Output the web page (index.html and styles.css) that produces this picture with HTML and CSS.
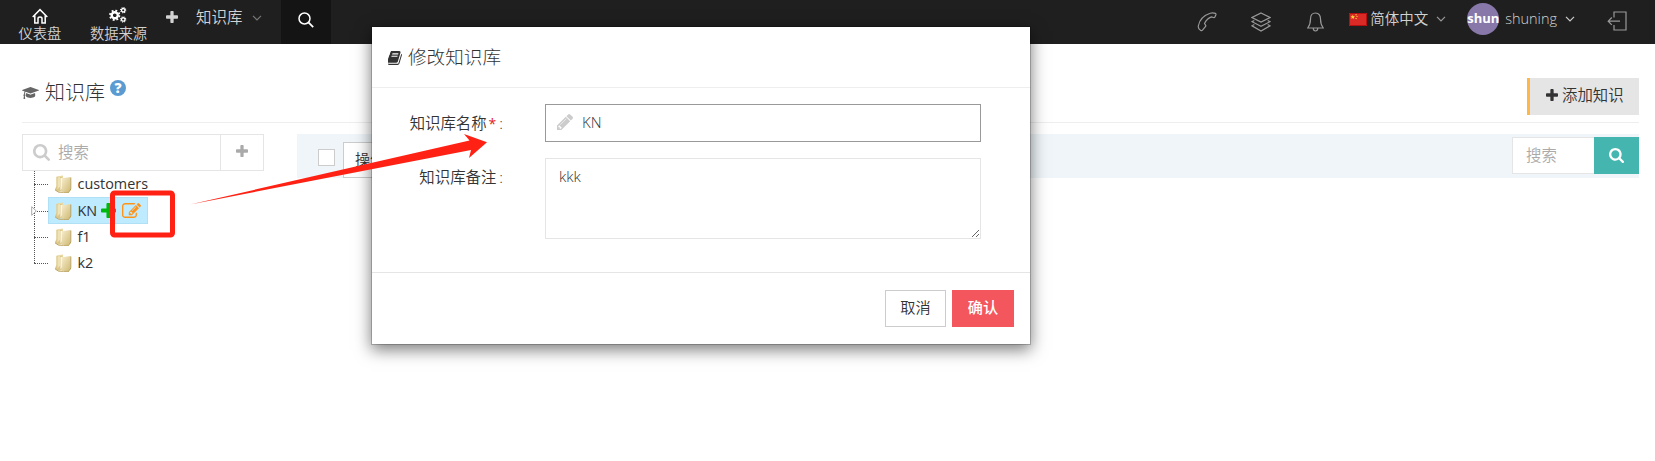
FILE: index.html
```html
<!DOCTYPE html>
<html lang="zh-CN">
<head>
<meta charset="utf-8">
<title>知识库</title>
<link rel="stylesheet" href="styles.css">
</head>
<body>
<svg class="defs" aria-hidden="true">
  <symbol id="plus" viewBox="192 128 1408 1408"><path d="M1600 736v192q0 40-28 68t-68 28h-416v416q0 40-28 68t-68 28h-192q-40 0-68-28t-28-68v-416h-416q-40 0-68-28t-28-68v-192q0-40 28-68t68-28h416v-416q0-40 28-68t68-28h192q40 0 68 28t28 68v416h416q40 0 68 28t28 68z"/></symbol>
  <symbol id="search" viewBox="64 128 1664 1664"><path d="M1216 832q0-185-131.500-316.500t-316.500-131.500-316.500 131.500-131.500 316.500 131.500 316.500 316.500 131.500 316.500-131.500 131.500-316.500zm512 832q0 52-38 90t-90 38q-54 0-90-38l-343-342q-179 124-399 124-143 0-273.500-55.500t-225-150-150-225-55.500-273.500 55.500-273.500 150-225 225-150 273.500-55.500 273.500 55.500 225 150 150 225 55.500 273.500q0 220-124 399l343 343q37 37 37 90z"/></symbol>
  <symbol id="chevron" viewBox="0 0 10 6"><path d="M1 .8 5 4.800 9 .8" fill="none" stroke="currentColor" stroke-width="1.200"/></symbol>
  <symbol id="gear" viewBox="-10 -10 20 20"><circle r="5.300" fill="none" stroke="currentColor" stroke-width="4.200"/><circle r="8.300" fill="none" stroke="currentColor" stroke-width="3.200" stroke-dasharray="3.260 3.260"/></symbol>
  <symbol id="folder" viewBox="0 0 18 18">
    <path d="M2.500 1.500 9 .5v14.500l-6.500 1z" fill="#e9d9a3"/>
    <path d="M2.500 2v9L.8 14.500l3 2.500 4-1V2z" fill="#dcc78a"/>
    <path d="M3.500 2.500 6 2v9.500l-2.500 3z" fill="#efe2b4"/>
    <path d="M6.500 3h1.700v10l-1.700 2.500z" fill="#fdf9ea"/>
    <path d="M8 3.300 16.500 2v13L15 17.200l-7.500-.4z" fill="url(#fold)"/>
    <path d="M15.300 16.600 16.800 14V2.500" fill="none" stroke="#b7a05e"/>
    <path d="M1 14.800 4.500 17.200l5 .2H15" fill="none" stroke="#bfa766"/>
  </symbol>
  <linearGradient id="fold" x2="1" y2="1"><stop offset="0" stop-color="#f8efcf"/><stop offset="1" stop-color="#d0b974"/></linearGradient>
</svg>

<header class="topbar">
  <nav class="nav">
    <a class="tile dashboard"><svg class="home" viewBox="0 0 16 16"><path d="M.7 9 8 1.600 15.300 9M2.800 7.500V15H6v-4.500q0-1.500 2-1.500t2 1.500V15h3.200V7.500" fill="none" stroke="currentColor" stroke-width="1.500"/></svg><span>仪表盘</span></a>
    <a class="tile sources"><svg class="gears" viewBox="0 0 18 16"><use href="#gear" x="0" y="2.500" width="11.500" height="11.500"/><use href="#gear" x="11" y="0" width="6.500" height="6.500"/><use href="#gear" x="11" y="9.200" width="6.500" height="6.500"/></svg><span>数据来源</span></a>
    <a class="quick"><svg class="plus12"><use href="#plus"/></svg><span>知识库</span><svg class="chev dim"><use href="#chevron"/></svg></a>
    <a class="find"><svg viewBox="0 0 16 16"><circle cx="6.500" cy="6.500" r="5.500" fill="none" stroke="currentColor" stroke-width="1.500"/><path d="m10.400 10.400 4.800 4.800" stroke="currentColor" stroke-width="1.800"/></svg></a>
  </nav>
  <div class="tools">
    <svg class="tool phone" viewBox="0 0 20 20"><path d="M13.200 1.200q2.500-.9 5.300.2.600.5.400 1.300l-1.100 2.400q-.5.700-1.300.4l-2-.6Q10 6.300 7.500 11.500l1.200 1.800q.3.600-.1 1.200l-3.100 3.700q-.8.900-1.700.3-2.900-1.700-2.500-4.500Q3 4.500 13.200 1.200z"/></svg>
    <svg class="tool layers" viewBox="0 0 20 20"><path d="m10 1 9 4.500-9 4.500-9-4.500zM3.300 8.400 1 9.700l9 4.600 9-4.600-2.300-1.300M3.300 12.500 1 13.800 10 19l9-5.200-2.300-1.300"/></svg>
    <svg class="tool bell" viewBox="0 0 17 20"><path d="M8.500 1C4.800 1 3.500 4 3.500 7c0 4-.8 6.500-2.800 9h15.600c-2-2.500-2.800-5-2.800-9 0-3-1.300-6-5-6zM6.200 16.300q.2 2.700 2.300 2.700t2.300-2.700"/></svg>
    <div class="lang"><svg class="flag" viewBox="0 0 18 13"><path fill="#d92a25" d="M0 0h18v13H0z"/><path d="M.5.5h17v12H.5z" fill="none" stroke="#b30f12"/><path d="m3.800 1.800.6 1.500H6L4.800 4.400l.4 1.600-1.400-.9-1.400.9.400-1.600-1.200-1.100h1.600zM6.500 1.300h1.200v1H6.500zM7.500 3h1v1h-1zM6.500 5h1.200v1H6.500z" fill="#ffd83b"/></svg><span>简体中文</span><svg class="chev"><use href="#chevron"/></svg></div>
    <div class="user"><span class="avatar">shun</span><span class="name">shuning</span><svg class="chev light"><use href="#chevron"/></svg></div>
    <svg class="tool logout" viewBox="0 0 20 20"><path d="M7 6.500V1h12v18H7v-5M13 10.200H1.200M4.800 6.500 1.200 10.200l3.600 3.700"/></svg>
  </div>
</header>

<main class="page">
  <div class="page-head">
    <h1><svg class="cap" viewBox="0 128 2304 1408" preserveAspectRatio="none"><path d="M1774 836l18 316q4 69-82 128t-235 93.500-323 34.500-323-34.500-235-93.500-82-128l18-316 574 181q22 7 48 7t48-7zm530-324q0 23-22 31l-1120 352q-4 1-10 1t-10-1l-652-206q-43 34-71 111.500t-34 178.500q63 36 63 109 0 69-58 107l58 433q2 14-8 25-9 11-24 11h-192q-15 0-24-11-10-11-8-25l58-433q-58-38-58-107 0-73 65-111 11-207 98-330l-333-104q-22-8-22-31t22-31l1120-352q4-1 10-1t10 1l1120 352q22 8 22 31z"/></svg><span>知识库</span><b class="help">?</b></h1>
    <button class="add"><svg class="plus12"><use href="#plus"/></svg>添加知识</button>
  </div>
  <div class="columns">
    <aside class="side">
      <div class="side-search"><div class="field"><svg><use href="#search"/></svg>搜索</div><div class="side-add"><svg class="plus12"><use href="#plus"/></svg></div></div>
      <ul class="tree">
        <li><i></i><div class="node"><svg><use href="#folder"/></svg>customers</div></li>
        <li class="current"><i></i><svg class="expander" viewBox="0 0 6 10"><path d="M.7.700 5.300 5 .7 9.300z" fill="#fff" stroke="#aaa"/></svg><div class="node"><svg><use href="#folder"/></svg>KN<svg class="node-add"><use href="#plus"/></svg><svg class="node-edit" viewBox="0 128 1792 1408"><path d="M888 1184l116-116-152-152-116 116v56h96v96h56zm440-720q-16-16-33 1l-350 350q-17 17-1 33t33-1l350-350q17-17 1-33zm80 594v190q0 119-84.500 203.500t-203.500 84.500h-832q-119 0-203.500-84.500t-84.500-203.500v-832q0-119 84.500-203.500t203.500-84.500h832q63 0 117 25 15 7 18 23 3 17-9 29l-49 49q-14 14-32 8-23-6-45-6h-832q-66 0-113 47t-47 113v832q0 66 47 113t113 47h832q66 0 113-47t47-113v-126q0-13 9-22l64-64q15-15 35-7t20 29zm-96-738l288 288-672 672h-288v-288zm444 132l-92 92-288-288 92-92q28-28 68-28t68 28l152 152q28 28 28 68t-28 68z"/></svg></div></li>
        <li><i></i><div class="node"><svg><use href="#folder"/></svg>f1</div></li>
        <li class="last"><i></i><div class="node"><svg><use href="#folder"/></svg>k2</div></li>
      </ul>
    </aside>
    <section class="bar">
      <span class="check"></span><button class="action">操作</button>
      <div class="bar-search"><div class="bar-field">搜索</div><button class="go"><svg><use href="#search"/></svg></button></div>
    </section>
  </div>
</main>

<div class="modal">
  <div class="modal-head"><svg class="book" viewBox="118 128 1550 1536" preserveAspectRatio="none"><path d="M1639 478q40 57 18 129l-275 906q-19 64-76.500 107.500t-122.500 43.500h-923q-77 0-148.500-53.500t-99.500-131.500q-24-67-2-127 0-4 3-27t4-37q1-8-3-21.500t-3-19.500q2-11 8-21t16.500-23.500 16.500-23.500q23-38 45-91.500t30-91.500q3-10 .5-30t-.5-28q3-11 17-28t17-23q21-36 42-92t25-90q1-9-2.500-32t.5-28q4-13 22-30.500t22-22.500q19-26 42.500-84.500t27.500-96.500q1-8-3-25.500t-2-26.500q2-8 9-18t18-23 17-21q8-12 16.500-30.500t15-35 16-36 19.500-32 26.500-23.500 36-11.500 47.500 5.500l-1 3q38-9 51-9h761q74 0 114 56t18 130l-274 906q-36 119-71.500 153.500t-128.500 34.500h-869q-27 0-38 15-11 16-1 43 24 70 144 70h923q29 0 56-15.500t35-41.500l300-987q7-22 5-57 38 15 59 43zm-1064 2q-4 13 2 22.500t20 9.500h608q13 0 25.500-9.500t16.500-22.500l21-64q4-13-2-22.500t-20-9.500h-608q-13 0-25.500 9.500t-16.500 22.500zm-83 256q-4 13 2 22.500t20 9.500h608q13 0 25.500-9.500t16.500-22.500l21-64q4-13-2-22.500t-20-9.500h-608q-13 0-25.500 9.500t-16.500 22.500z"/></svg><span>修改知识库</span></div>
  <div class="modal-body">
    <div class="row"><label>知识库名称<em>*</em>:</label><div class="name-input"><svg viewBox="128 149 1515 1515"><path d="M491 1536l91-91-235-235-91 91v107h128v128h107zm523-928q0-22-22-22-10 0-17 7l-542 542q-7 7-7 17 0 22 22 22 10 0 17-7l542-542q7-7 7-17zm-54-192l416 416-832 832h-416v-416zm683 96q0 53-37 90l-166 166-416-416 166-165q36-38 90-38 53 0 91 38l235 234q37 39 37 91z"/></svg>KN</div></div>
    <div class="row"><label>知识库备注<span class="colon">:</span></label><textarea>kkk</textarea></div>
  </div>
  <div class="modal-foot"><button class="cancel">取消</button><button class="ok">确认</button></div>
</div>

<svg class="marks" viewBox="0 0 1655 461" aria-hidden="true">
  <rect x="112.500" y="193" width="60" height="42" rx="2" fill="none" stroke="#ff2214" stroke-width="5"/>
  <path d="M190 204.500 469.500 140.500 464 134l23 8.300L469 158l2-8z" fill="#ff2214"/>
</svg>
</body>
</html>
```
FILE: styles.css
```css
* { box-sizing: border-box; }
body { margin: 0; height: 461px; overflow: hidden; position: relative; background: #fff; color: #333; font: 14px/20px "Open Sans", "Noto Sans CJK SC", sans-serif; }
svg { display: block; flex: none; fill: currentColor; }
button { font: inherit; border: 0; padding: 0; border-radius: 0; }
.defs { position: absolute; width: 0; height: 0; }
.plus12 { width: 12px; height: 12px; }

.topbar { display: flex; justify-content: space-between; height: 44px; background: #1f1f1f; color: #d2d2d2; font-weight: 350; }
.nav { display: flex; }
.tile { display: flex; flex-direction: column; align-items: center; line-height: 20px; font-size: 14.300px; }
.tile svg { color: #fff; }
.dashboard { margin-left: 18.500px; padding-top: 8px; }
.home { width: 16px; height: 16px; }
.sources { margin-left: 28.500px; padding-top: 7px; }
.gears { width: 18px; height: 16px; margin-bottom: 1px; }
.quick { display: flex; align-items: center; height: 34px; margin-left: 19px; width: 115px; font-size: 15.500px; }
.quick span { margin: -1px 9px 0 18px; }
.chev { width: 10px; height: 6px; color: #999; }
.chev.dim { color: #777; margin-top: 2px; }
.chev.light { color: #ccc; }
.find { width: 50px; background: #141414; color: #fff; padding: 12px 17px; }
.find svg { width: 16px; height: 16px; }
.tools { display: flex; padding-right: 28px; }
.tool { width: 20px; height: 20px; margin-top: 12px; fill: none; stroke: #999; stroke-width: 1.200; }
.layers { margin-left: 34px; }
.bell { width: 17px; margin-left: 36px; }
.lang { display: flex; align-items: center; height: 38px; margin-left: 25px; font-size: 14.500px; }
.lang span { margin-top: -1px; }
.flag { width: 18px; height: 13px; margin-right: 3px; }
.lang .chev { margin-left: 8px; }
.user { display: flex; align-items: center; height: 38px; margin-left: 21px; }
.avatar { width: 32px; height: 32px; border-radius: 50%; background: #8877a9; color: #fff; font-weight: 700; font-size: 13px; line-height: 30px; text-align: center; }
.name { margin: 0 8px 0 6px; font-size: 14.500px; font-weight: 350; }
.logout { margin: 11px 0 0 32px; }

.page { padding: 34px 16px 0 22px; }
.page-head { display: flex; justify-content: space-between; height: 45px; border-bottom: 1px solid #eee; }
h1 { display: flex; margin: 0; font-weight: 300; font-size: 20px; line-height: 28px; color: #333; }
h1 span { margin-top: 1px; }
.cap { width: 17px; height: 12px; margin: 9px 6px 0 0; color: #666; }
.help { width: 16px; height: 16px; margin: 2px 0 0 5px; border-radius: 50%; background: #5b9bd1; color: #fff; font-size: 14px; font-weight: 800; line-height: 16px; text-align: center; }
.add { display: flex; align-items: center; width: 112px; height: 37px; padding: 0 0 2px 16px; border-left: 3px solid #ffb848; background: #e5e5e5; color: #333; font-size: 15.400px; font-weight: 350; }
.add svg { margin: -1px 4px 0 0; }
.columns { display: flex; gap: 33px; padding-top: 11px; }
.side { width: 242px; }
.side-search { display: flex; height: 37px; border: 1px solid #e5e5e5; color: #aaa; }
.field { display: flex; align-items: center; flex: 1; padding-left: 10px; font-size: 15.400px; font-weight: 350; }
.field svg { width: 17px; height: 17px; margin-right: 8px; color: #ccc; }
.side-add { display: flex; justify-content: center; align-items: center; width: 43px; border-left: 1px solid #e5e5e5; }
.side-add svg { margin-top: -3px; }
.tree { list-style: none; margin: 0; padding: 0 0 0 12px; }
.tree li { display: flex; align-items: center; height: 26px; position: relative; }
.tree li.current { height: 27px; }
.tree li i { align-self: stretch; width: 14px; margin-bottom: 12px; border-bottom: 1px dotted #555; position: relative; }
.tree li i::before { content: ""; position: absolute; left: 0; top: 0; height: 27px; border-left: 1px dotted #555; }
.tree li.last i::before { height: 13px; }
.expander { position: absolute; left: -3px; top: 9px; width: 6px; height: 10px; }
.node { display: flex; align-items: center; height: 26px; padding-left: 6px; font-size: 14.400px; }
.node svg { width: 18px; height: 18px; margin-right: 5.500px; }
.current .node { height: 27px; width: 100px; padding: 1px 0 0 5px; border: 1px solid #b0e0f5; background: #beebff; }
.node svg.node-add { width: 15px; height: 15px; margin: -2px 6px 0 4px; color: #00b80f; }
.node svg.node-edit { width: 19px; height: 15px; margin: -2px 0 0; color: #ff9317; }

.bar { flex: 1; display: flex; height: 44px; background: #eff5f9; }
.check { width: 17px; height: 17px; margin: 15px 8px 0 21px; border: 1px solid #ccc; background: #fff; }
.action { height: 36px; width: 80px; margin-top: 8px; padding: 0 0 2px 11px; border: 1px solid #ccc; background: #fff; color: #333; font-size: 15px; font-weight: 350; text-align: left; }
.bar-search { display: flex; margin: 3px 0 0 auto; height: 37px; }
.bar-field { width: 82px; padding-left: 13px; border: 1px solid #e5e5e5; border-right: 0; background: #fff; color: #aaa; font-size: 15.400px; font-weight: 350; line-height: 35px; }
.go { display: flex; align-items: center; justify-content: center; width: 45px; padding-bottom: 1px; background: #45b6af; color: #fff; }
.go svg { width: 15px; height: 15px; }

.modal { position: absolute; left: 371px; top: 26px; width: 660px; height: 319px; border: 1px solid rgba(0,0,0,.2); background: #fff; background-clip: padding-box; box-shadow: 0 5px 15px rgba(0,0,0,.5); }
.modal-head { display: flex; align-items: center; height: 61px; padding-left: 16px; border-bottom: 1px solid #eee; font-size: 18.600px; font-weight: 300; color: #333; }
.book { width: 14px; height: 14px; margin: 2px 6px 0 0; }
.modal-body { padding-top: 16px; height: 184px; }
.row { display: flex; margin-bottom: 16px; }
label { width: 131px; margin-right: 42px; padding-top: 10px; font-size: 15.400px; font-weight: 350; text-align: right; line-height: 20px; }
em { font-style: normal; color: #e02222; font-size: 14px; font-weight: 400; padding: 0 3px 0 2px; }
.colon { padding-left: 3px; }
.name-input { display: flex; align-items: center; width: 436px; height: 38px; border: 1px solid #999; padding: 0 0 2px 11px; color: #333; font-size: 15px; font-weight: 350; }
.name-input svg { width: 16px; height: 16px; margin-right: 9px; color: #ccc; }
textarea { width: 436px; height: 81px; padding: 7px 13px; border: 1px solid #e5e5e5; outline: 0; color: #333; font: 350 15px/20px "Open Sans", "Noto Sans CJK SC", sans-serif; resize: both; }
.modal-foot { display: flex; justify-content: flex-end; gap: 6px; padding: 17px 16px 0 0; border-top: 1px solid #e5e5e5; }
.modal-foot button { height: 37px; padding-bottom: 3px; font-size: 15.200px; font-weight: 350; }
.modal-foot .cancel { width: 61px; border: 1px solid #ccc; background: #fff; color: #333; }
.modal-foot .ok { width: 62px; background: #f3565d; color: #fff; font-weight: 500; }
.marks { position: absolute; left: 0; top: 0; width: 1655px; height: 461px; pointer-events: none; }
```
